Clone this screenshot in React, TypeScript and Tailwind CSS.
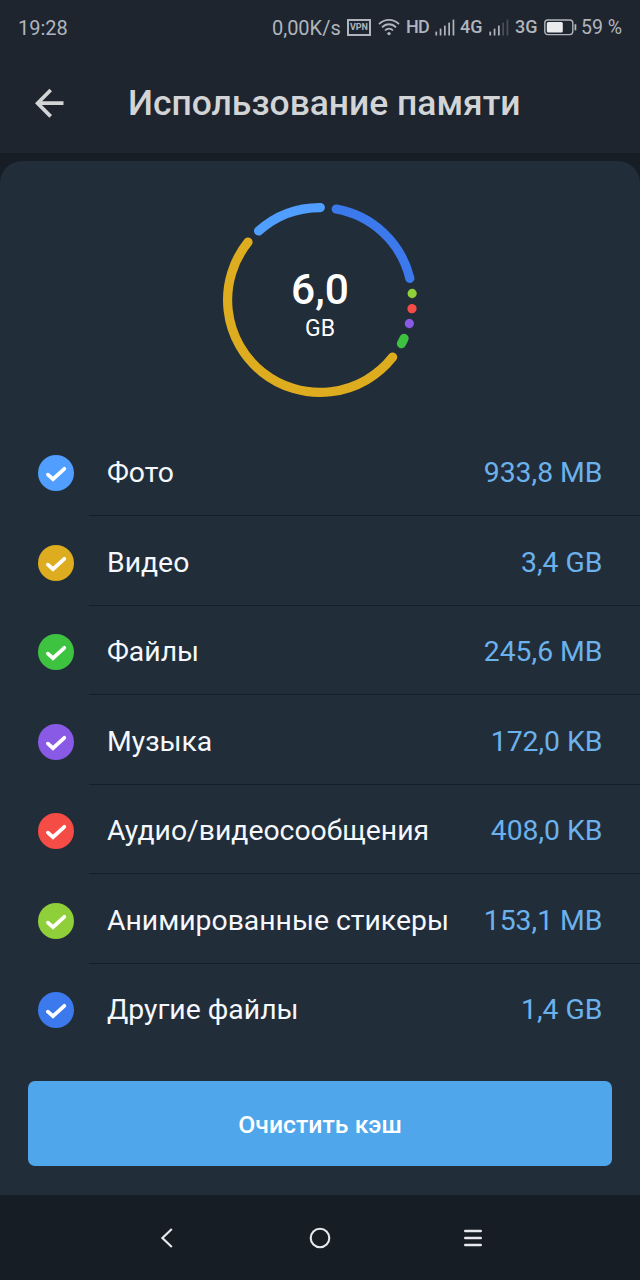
type Category = { label: string; size: string; color: string; from: number; to: number };

// from / to are the arc ends in degrees, clockwise from the top
const CATEGORIES: Category[] = [
  { label: 'Фото', size: '933,8 MB', color: '#509eff', from: -41.7, to: 0.2 },
  { label: 'Видео', size: '3,4 GB', color: '#deac1f', from: 128.2, to: 308.8 },
  { label: 'Файлы', size: '245,6 MB', color: '#3ec340', from: 114.5, to: 118.2 },
  { label: 'Музыка', size: '172,0 KB', color: '#895ae5', from: 104.7, to: 104.8 },
  { label: 'Аудио/видеосообщения', size: '408,0 KB', color: '#f64c46', from: 95.3, to: 95.4 },
  { label: 'Анимированные стикеры', size: '153,1 MB', color: '#8fcf39', from: 85.9, to: 86 },
  { label: 'Другие файлы', size: '1,4 GB', color: '#3c79ed', from: 10.1, to: 76.5 },
];

const RADIUS = 92.4;

function arcPath(from: number, to: number) {
  const point = (deg: number) => {
    const a = (deg * Math.PI) / 180;
    return `${100 + RADIUS * Math.sin(a)} ${100 - RADIUS * Math.cos(a)}`;
  };
  return `M${point(from)}A${RADIUS} ${RADIUS} 0 ${to - from > 180 ? 1 : 0} 1 ${point(to)}`;
}

function Signal({ level }: { level: number }) {
  return (
    <svg width="20" height="17" viewBox="0 0 20 17" fill="currentColor">
      {[0, 1, 2, 3, 4].map(i => (
        <rect key={i} x={0.4 + i * 4.3} y={12.6 - i * 3} width="1.7" height={3.9 + i * 3} opacity={i < level ? 1 : 0.3} />
      ))}
    </svg>
  );
}

function StatusBar() {
  return (
    <div className="flex h-[54px] items-center justify-between px-[18px] text-[20px] leading-none text-[#b0b5bd]">
      <span className="pt-px">19:28</span>
      <div className="flex items-center">
        <span className="w-[75px] whitespace-nowrap pt-px">0,00K/s</span>
        <span className="flex h-[17px] w-[24px] items-center justify-center border-2 border-current text-[9px] font-bold leading-none">VPN</span>
        <svg className="ml-[7px]" width="22" height="18" viewBox="0 0 22 18" fill="none" stroke="currentColor" strokeWidth="1.8">
          <path d="M1 6.2C6.7.4 15.3.4 21 6.2M4 9.4c4-4.2 10-4.2 14 0M7 12.5c2.3-2.4 5.7-2.4 8 0" />
          <circle cx="11" cy="15.6" r="1.7" fill="currentColor" stroke="none" />
        </svg>
        <span className="ml-[6px] w-[29px] text-[18px] font-medium tracking-[-0.7px]">HD</span>
        <Signal level={5} />
        <span className="ml-[5px] w-[29px] text-[18px] font-medium">4G</span>
        <Signal level={3} />
        <span className="ml-[6px] w-[29px] text-[18px] font-medium">3G</span>
        <svg width="33" height="17" viewBox="0 0 33 17" fill="none">
          <rect x="0.8" y="1" width="28" height="14.6" rx="3" stroke="currentColor" strokeWidth="1.4" />
          <rect x="2.8" y="3" width="16" height="10.6" rx="1.5" fill="#e9ebec" />
          <path d="M31.4 5.2v6.2" stroke="currentColor" strokeWidth="1.8" />
        </svg>
        <span className="ml-[4px] whitespace-nowrap pt-[2px] text-[19.5px]">59 %</span>
      </div>
    </div>
  );
}

function UsageChart() {
  return (
    <div className="mx-auto mt-[39px] grid h-[200px] w-[200px] place-items-center">
      <svg className="col-start-1 row-start-1" width="200" height="200" viewBox="0 0 200 200" fill="none" strokeWidth="9.2" strokeLinecap="round">
        {CATEGORIES.map(c => (
          <path key={c.label} d={arcPath(c.from, c.to)} stroke={c.color} />
        ))}
      </svg>
      <div className="col-start-1 row-start-1 flex flex-col items-center pt-[12px] text-white">
        <span className="text-[42.5px] font-medium leading-[46px]">6,0</span>
        <span className="text-[23px] leading-[32px]">GB</span>
      </div>
    </div>
  );
}

function CategoryRow({ label, size, color, last }: { label: string; size: string; color: string; last: boolean }) {
  return (
    <div className="flex h-[89.5px] pl-[37.7px]">
      <div className="mt-[28.8px] h-9 w-9 rounded-full" style={{ backgroundColor: color }}>
        <svg width="36" height="36" viewBox="0 0 36 36" fill="none" stroke="#fff" strokeWidth="3.7" strokeLinecap="round" strokeLinejoin="miter">
          <path d="M9.9 19.6l5.1 4.6L26.3 13.8" />
        </svg>
      </div>
      <div className={`ml-[15.3px] flex flex-1 items-center justify-between pl-[18px] pr-[37.5px] text-[28.35px] leading-none ${last ? 'pt-[3px]' : 'border-b border-[#151e29] pt-[5px]'}`}>
        <span className="whitespace-nowrap text-[#f5f8fc]">{label}</span>
        <span className="whitespace-nowrap text-[#6bb2ec]">{size}</span>
      </div>
    </div>
  );
}

export default function App() {
  return (
    <div className="flex h-[1280px] w-[640px] flex-col overflow-hidden bg-[#171d25] font-[Roboto,sans-serif]">
      <header className="h-[153px] bg-[#1e252f]">
        <StatusBar />
        <div className="flex h-[98px] items-center text-[#d3d4d6]">
          <svg className="ml-[35px]" width="29" height="30" viewBox="0 0 29 30" fill="none" stroke="currentColor" strokeWidth="3.7">
            <path d="M28.5 15.2H3M15.7 2L2.6 15.2l13.1 13.2" />
          </svg>
          <h1 className="ml-[64px] whitespace-nowrap pt-[2px] text-[35.45px] font-medium leading-none">Использование памяти</h1>
        </div>
      </header>

      <main className="mt-[8px] flex h-[1034px] flex-col rounded-t-[22px] bg-[#222d3a]">
        <UsageChart />
        <div className="mt-[26.5px]">
          {CATEGORIES.map((c, i) => (
            <CategoryRow key={c.label} label={c.label} size={c.size} color={c.color} last={i === CATEGORIES.length - 1} />
          ))}
        </div>
        <button className="mx-[28.4px] mt-[28px] h-[85px] shrink-0 rounded-[7px] bg-[#50a6ea] pt-[4px] text-[24.8px] font-medium leading-none text-white">
          Очистить кэш
        </button>
      </main>

      <nav className="flex h-[85px] items-center text-[#e6e8ee]">
        <svg className="ml-[160px]" width="14" height="20" viewBox="0 0 14 20" fill="none" stroke="currentColor" strokeWidth="2.2">
          <path d="M11.8 1L2.4 10l9.4 9" />
        </svg>
        <svg className="ml-[135px]" width="22" height="22" viewBox="0 0 22 22" fill="none" stroke="currentColor" strokeWidth="2.1">
          <circle cx="11" cy="11" r="9.3" />
        </svg>
        <svg className="ml-[133px]" width="18" height="18" viewBox="0 0 18 18" fill="none" stroke="currentColor" strokeWidth="2.6" strokeLinecap="round">
          <path d="M1.3 2h15.4M1.3 9h15.4M1.3 16h15.4" />
        </svg>
      </nav>
    </div>
  );
}
